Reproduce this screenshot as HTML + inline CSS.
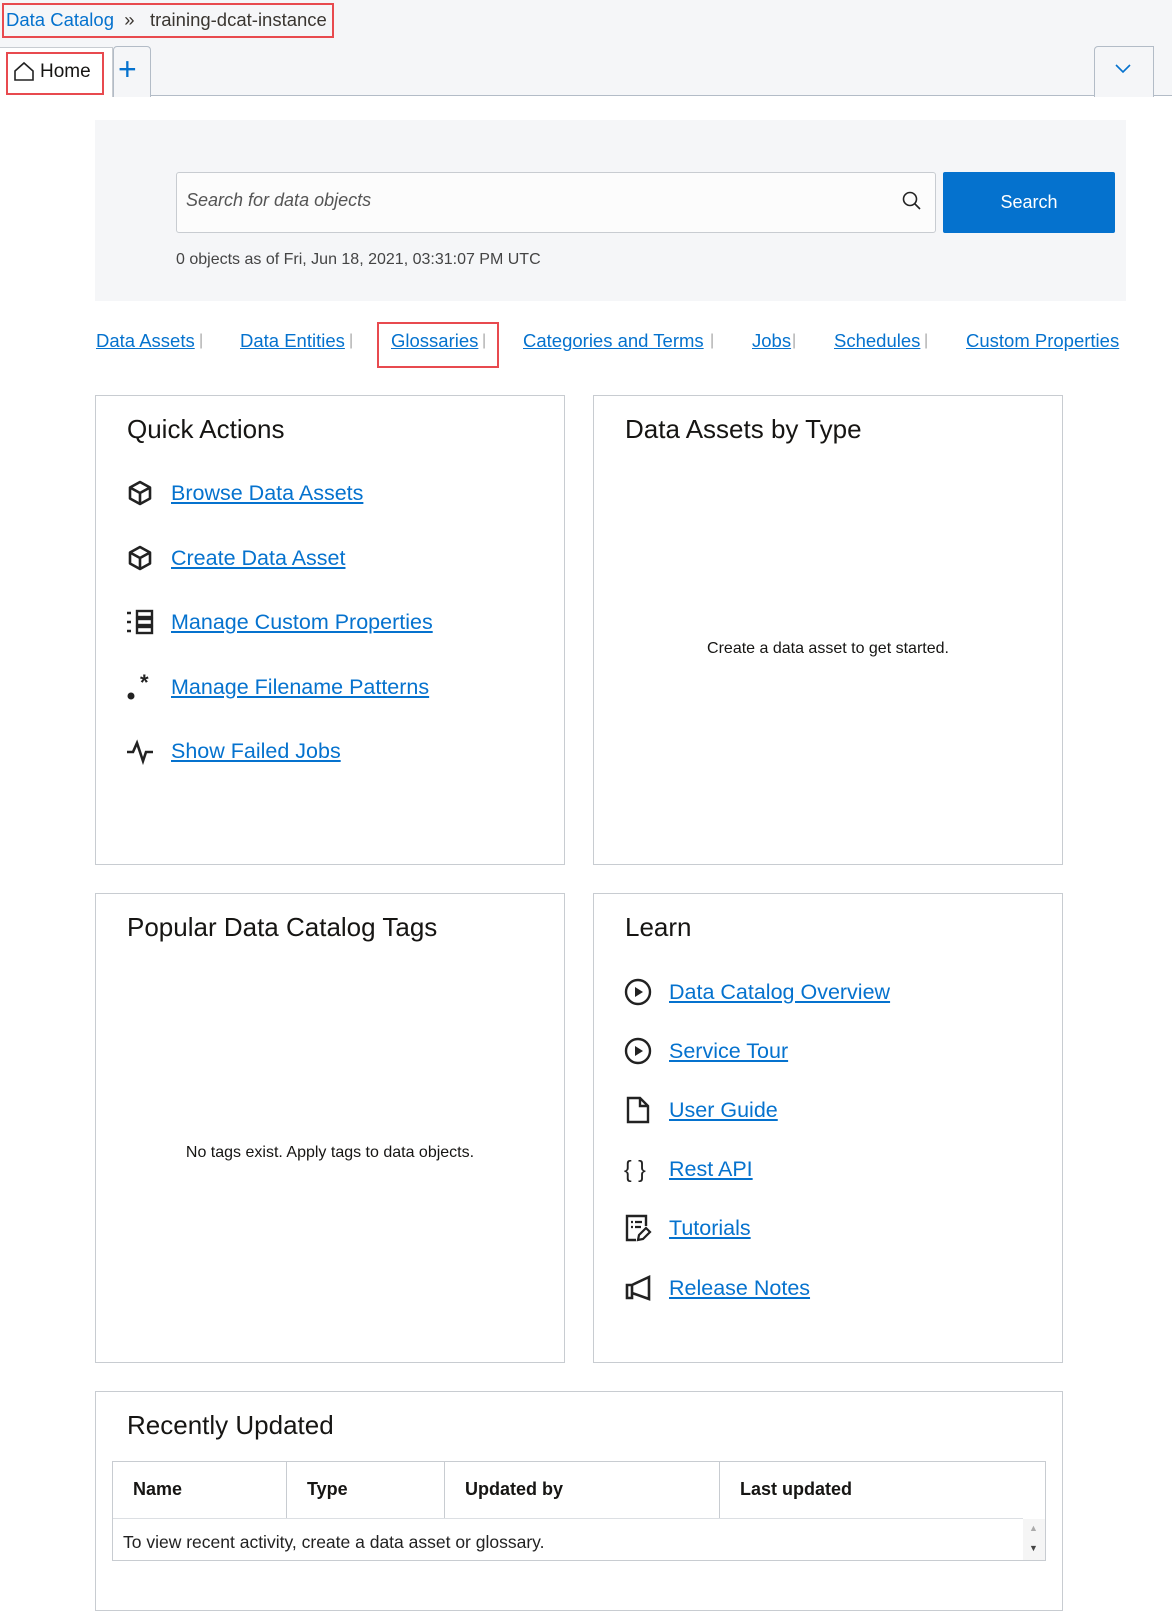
<!DOCTYPE html>
<html><head><meta charset="utf-8">
<style>
*{box-sizing:border-box;margin:0;padding:0}
body{width:1172px;height:1594px;background:#fff;font-family:"Liberation Sans",Arial,sans-serif;color:#161513;position:relative;overflow:hidden}
.abs{position:absolute}
a{color:#0572ce;text-decoration:underline}
.topbg{left:0;top:0;width:1172px;height:96px;background:#f5f6f8;border-bottom:1px solid #b3bcc7}
.card{position:absolute;border:1px solid #c8ccd1;background:#fff}
.card h2{position:absolute;left:31px;top:18px;font-size:26px;font-weight:normal;color:#161513}
.item{position:absolute;left:30px;display:flex;align-items:center;font-size:21.5px}
.item svg{width:28px;height:28px;margin-right:17px}
.nav a{position:absolute;top:330px;font-size:18.5px}
.nav span{color:#aaa}
</style></head><body>
<div class="abs topbg"></div>
<div class="abs" style="left:2px;top:3px;width:332px;height:35px;border:2px solid #e84a4f"></div>
<div class="abs" style="left:6px;top:9px;font-size:18.5px;color:#3a3631"><a style="text-decoration:none">Data Catalog</a> &nbsp;»&nbsp;&nbsp; training-dcat-instance</div>
<div class="abs" style="left:0;top:47px;width:113px;height:50px;background:#fff;border-top:1px solid #c8ccd1;border-right:1px solid #c8ccd1"></div>
<div class="abs" style="left:6px;top:52px;width:98px;height:43px;border:2px solid #e84a4f"></div>
<svg class="abs" style="left:13px;top:61px" width="22" height="22" viewBox="0 0 22 22"><path d="M2 10 L11 2 L20 10 V19 H2 Z" fill="none" stroke="#222" stroke-width="1.6"/></svg>
<div class="abs" style="left:40px;top:61px;font-size:19px">Home</div>
<div class="abs" style="left:113px;top:46px;width:38px;height:51px;border:1px solid #b3bcc7;border-bottom:none;border-radius:4px 4px 0 0;background:#f5f6f8"></div>
<div class="abs" style="left:118px;top:50px;font-size:32px;color:#0572ce;line-height:38px">+</div>
<div class="abs" style="left:1094px;top:46px;width:60px;height:51px;border:1px solid #b3bcc7;border-bottom:none;border-radius:4px 0 0 0;background:#f5f6f8"></div>
<svg class="abs" style="left:1114px;top:63px" width="18" height="12" viewBox="0 0 18 12"><path d="M2 2 L9 9 L16 2" fill="none" stroke="#0572ce" stroke-width="1.6"/></svg>

<div class="abs" style="left:95px;top:120px;width:1031px;height:181px;background:#f5f6f8"></div>
<div class="abs" style="left:176px;top:172px;width:760px;height:61px;border:1px solid #c8ccd1;border-radius:3px;background:#fcfcfc"></div>
<div class="abs" style="left:186px;top:190px;font-size:18px;font-style:italic;color:#555">Search for data objects</div>
<svg class="abs" style="left:901px;top:190px" width="22" height="22" viewBox="0 0 22 22"><circle cx="9" cy="9" r="6.5" fill="none" stroke="#222" stroke-width="1.6"/><path d="M14 14 L19 19" stroke="#222" stroke-width="1.6"/></svg>
<div class="abs" style="left:943px;top:172px;width:172px;height:61px;background:#0572ce;border-radius:2px;color:#fff;font-size:18px;text-align:center;line-height:61px">Search</div>
<div class="abs" style="left:176px;top:251px;font-size:16px;color:#444">0 objects as of Fri, Jun 18, 2021, 03:31:07 PM UTC</div>

<div class="nav">
<a style="left:96px">Data Assets</a><span class="abs" style="left:199px;top:332px">|</span>
<a style="left:240px">Data Entities</a><span class="abs" style="left:349px;top:332px">|</span>
<a style="left:391px">Glossaries</a><span class="abs" style="left:482px;top:332px">|</span>
<a style="left:523px">Categories and Terms</a><span class="abs" style="left:710px;top:332px">|</span>
<a style="left:752px">Jobs</a><span class="abs" style="left:792px;top:332px">|</span>
<a style="left:834px">Schedules</a><span class="abs" style="left:924px;top:332px">|</span>
<a style="left:966px">Custom Properties</a>
</div>
<div class="abs" style="left:377px;top:322px;width:122px;height:46px;border:2px solid #e84a4f"></div>

<div class="card" style="left:95px;top:395px;width:470px;height:470px">
<h2>Quick Actions</h2>
<div class="item" style="top:83px"><svg viewBox="0 0 28 28"><path d="M14 3 L24 8.5 V19.5 L14 25 L4 19.5 V8.5 Z M4 8.5 L14 14 L24 8.5 M14 14 V25" fill="none" stroke="#222" stroke-width="2.6" stroke-linejoin="round"/></svg><a>Browse Data Assets</a></div>
<div class="item" style="top:148px"><svg viewBox="0 0 28 28"><path d="M14 3 L24 8.5 V19.5 L14 25 L4 19.5 V8.5 Z M4 8.5 L14 14 L24 8.5 M14 14 V25" fill="none" stroke="#222" stroke-width="2.6" stroke-linejoin="round"/></svg><a>Create Data Asset</a></div>
<div class="item" style="top:212px"><svg viewBox="0 0 28 28"><path d="M1 5h4M1 14h4M1 23h4" stroke="#222" stroke-width="2.4"/><rect x="11" y="3" width="15" height="6" fill="none" stroke="#222" stroke-width="2.4"/><rect x="11" y="11" width="15" height="6" fill="none" stroke="#222" stroke-width="2.4"/><rect x="11" y="19" width="15" height="6" fill="none" stroke="#222" stroke-width="2.4"/></svg><a>Manage Custom Properties</a></div>
<div class="item" style="top:277px"><svg viewBox="0 0 28 28"><circle cx="5" cy="23" r="3.5" fill="#222"/><text x="14" y="17" font-size="22" font-weight="bold" fill="#222" font-family="Liberation Sans">*</text></svg><a>Manage Filename Patterns</a></div>
<div class="item" style="top:341px"><svg viewBox="0 0 28 28"><path d="M1 15 H7 L11 6 L17 24 L20 15 H27" fill="none" stroke="#222" stroke-width="2.6"/></svg><a>Show Failed Jobs</a></div>
</div>

<div class="card" style="left:593px;top:395px;width:470px;height:470px">
<h2>Data Assets by Type</h2>
<div class="abs" style="left:0;width:100%;top:244px;text-align:center;font-size:16px">Create a data asset to get started.</div>
</div>

<div class="card" style="left:95px;top:893px;width:470px;height:470px">
<h2>Popular Data Catalog Tags</h2>
<div class="abs" style="left:0;width:100%;top:250px;text-align:center;font-size:16px">No tags exist. Apply tags to data objects.</div>
</div>

<div class="card" style="left:593px;top:893px;width:470px;height:470px">
<h2>Learn</h2>
<div class="item" style="top:84px"><svg viewBox="0 0 28 28"><circle cx="14" cy="14" r="12" fill="none" stroke="#222" stroke-width="2.4"/><path d="M11 9 L19 14 L11 19 Z" fill="#222"/></svg><a>Data Catalog Overview</a></div>
<div class="item" style="top:143px"><svg viewBox="0 0 28 28"><circle cx="14" cy="14" r="12" fill="none" stroke="#222" stroke-width="2.4"/><path d="M11 9 L19 14 L11 19 Z" fill="#222"/></svg><a>Service Tour</a></div>
<div class="item" style="top:202px"><svg viewBox="0 0 28 28"><path d="M4 2 H16 L24 10 V26 H4 Z M16 2 V10 H24" fill="none" stroke="#222" stroke-width="2.4"/></svg><a>User Guide</a></div>
<div class="item" style="top:261px"><svg viewBox="0 0 28 28"><text x="0" y="22" font-size="23" fill="#222" font-family="Liberation Sans">{ }</text></svg><a>Rest API</a></div>
<div class="item" style="top:320px"><svg viewBox="0 0 28 28"><path d="M22 12 V2 H3 V26 H12" fill="none" stroke="#222" stroke-width="2.4"/><path d="M7 8h2M11 8h7M7 13h2M11 13h6" stroke="#222" stroke-width="2.2"/><path d="M14 26 L15 21 L22 14 L26 18 L19 25 Z" fill="none" stroke="#222" stroke-width="2.2"/></svg><a>Tutorials</a></div>
<div class="item" style="top:380px"><svg viewBox="0 0 28 28"><path d="M3 11 H8 V24 H3 Z M8 11 L25 3 V25 L8 19" fill="none" stroke="#222" stroke-width="2.6"/></svg><a>Release Notes</a></div>
</div>

<div class="card" style="left:95px;top:1391px;width:968px;height:220px">
<h2>Recently Updated</h2>
</div>
<div class="abs" style="left:112px;top:1461px;width:934px;height:100px;border:1px solid #c8ccd1;background:#fff"></div>
<div class="abs" style="left:286px;top:1462px;width:1px;height:56px;background:#c8ccd1"></div>
<div class="abs" style="left:444px;top:1462px;width:1px;height:56px;background:#c8ccd1"></div>
<div class="abs" style="left:719px;top:1462px;width:1px;height:56px;background:#c8ccd1"></div>
<div class="abs" style="left:113px;top:1518px;width:910px;height:1px;background:#dcdfe3"></div>
<div class="abs" style="left:133px;top:1479px;font-size:18px;font-weight:bold">Name</div>
<div class="abs" style="left:307px;top:1479px;font-size:18px;font-weight:bold">Type</div>
<div class="abs" style="left:465px;top:1479px;font-size:18px;font-weight:bold">Updated by</div>
<div class="abs" style="left:740px;top:1479px;font-size:18px;font-weight:bold">Last updated</div>
<div class="abs" style="left:1023px;top:1519px;width:22px;height:41px;background:#f5f5f5"></div>
<div class="abs" style="left:1029px;top:1523px;font-size:9px;color:#aaa">▲</div>
<div class="abs" style="left:1029px;top:1543px;font-size:9px;color:#444">▼</div>
<div class="abs" style="left:123px;top:1532px;font-size:17.5px;color:#222">To view recent activity, create a data asset or glossary.</div>
</body></html>
